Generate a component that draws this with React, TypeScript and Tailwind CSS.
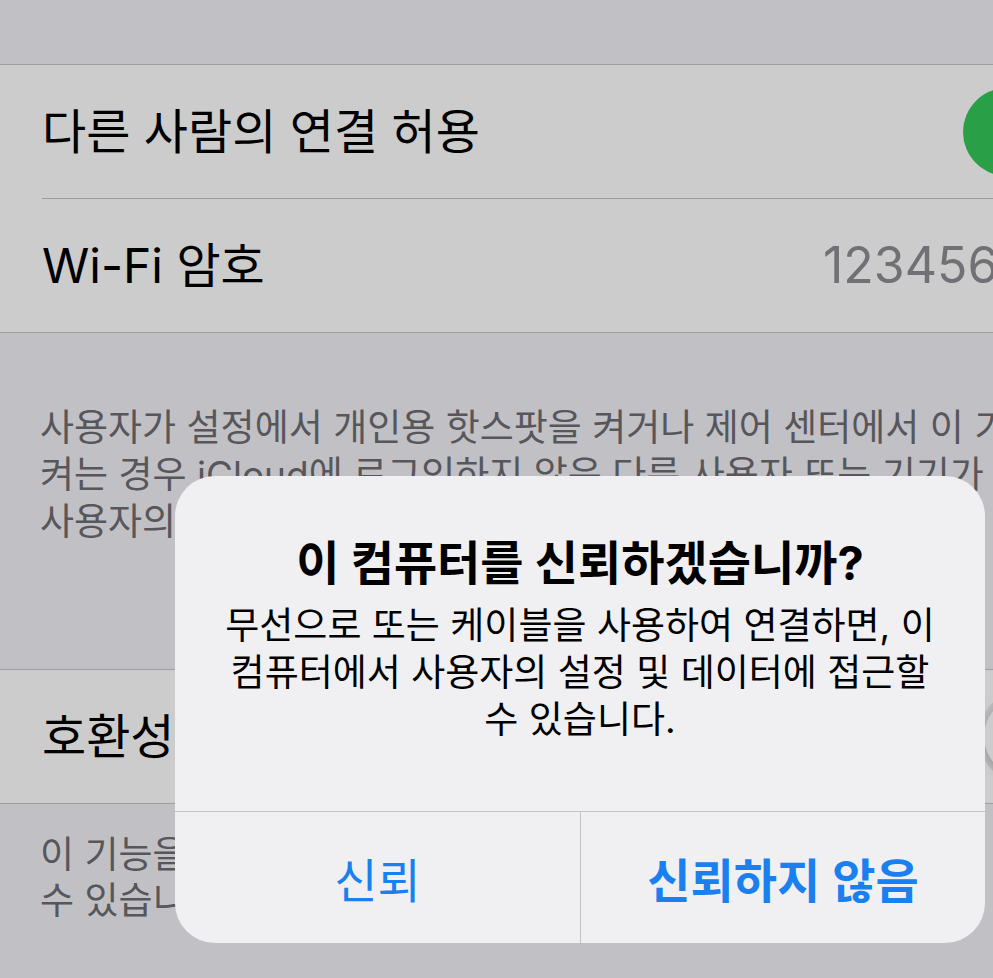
const font = { fontFamily: '"Inter", "Noto Sans CJK KR", sans-serif' };

function Toggle({ on }: { on: boolean }) {
  if (on) {
    return <div className="h-[88px] w-[153px] shrink-0 rounded-full bg-[#34c759]" />;
  }
  return (
    <div className="flex h-[93px] w-[153px] shrink-0 items-center rounded-full bg-[#e9e9eb] px-[6px]">
      <div className="h-[81px] w-[81px] rounded-full bg-white shadow-[0_3px_8px_rgba(0,0,0,0.2)]" />
    </div>
  );
}

function Alert() {
  return (
    <div className="flex w-[810px] flex-col overflow-hidden rounded-[40px] bg-[#f0f0f2] text-center">
      <div className="px-[30px] pb-[68px] pt-[60px]">
        <div className="text-[47px] font-bold leading-[54px] text-black">이 컴퓨터를 신뢰하겠습니까?</div>
        <div className="mt-[12px] text-[37px] leading-[47px] text-black">
          무선으로 또는 케이블을 사용하여 연결하면, 이
          <br />
          컴퓨터에서 사용자의 설정 및 데이터에 접근할
          <br />
          수 있습니다.
        </div>
      </div>
      <div className="grid h-[132px] grid-cols-2 border-t border-[#c3c3c6]">
        <button className="flex items-center justify-center pt-[8px] text-[47px] text-[#1a80f0]">신뢰</button>
        <button className="flex items-center justify-center border-l border-[#c3c3c6] pt-[8px] text-[47px] font-semibold text-[#1a80f0]">
          신뢰하지 않음
        </button>
      </div>
    </div>
  );
}

export default function App() {
  return (
    <div className="h-[978px] w-[993px] overflow-hidden bg-[#f2f2f7]" style={font}>
      <div className="relative w-[1164px]">
        <div className="h-[64px]" />

        <div className="border-y border-[#c6c6c8] bg-white">
          <div className="flex h-[133px] items-center justify-between pl-[42px] pr-[48px]">
            <span className="text-[48px] text-black">다른 사람의 연결 허용</span>
            <Toggle on />
          </div>
          <div className="ml-[42px] border-t border-[#c6c6c8]" />
          <div className="flex h-[133px] items-center pl-[42px]">
            <span className="w-[781px] shrink-0 text-[48px] text-black">Wi-Fi 암호</span>
            <span className="text-[50px] text-[#8e8e93]">12345678</span>
          </div>
        </div>

        <div className="whitespace-nowrap px-[40px] pb-[124px] pt-[71px] text-[37px] leading-[47px] text-[#6d6d72]">
          <div>사용자가 설정에서 개인용 핫스팟을 켜거나 제어 센터에서 이 기능을</div>
          <div>켜는 경우 iCloud에 로그인하지 않은 다른 사용자 또는 기기가</div>
          <div>사용자의 공유 네트워크를 찾을 수 있습니다.</div>
        </div>

        <div className="border-y border-[#c6c6c8] bg-white">
          <div className="flex h-[133px] items-center justify-between pl-[42px] pr-[33px]">
            <span className="text-[48px] text-black">호환성 최대화</span>
            <Toggle on={false} />
          </div>
        </div>

        <div className="whitespace-nowrap px-[40px] pt-[28px] text-[37px] leading-[46px] text-[#6d6d72]">
          <div>이 기능을 켜면 핫스팟에 연결된 기기의 인터넷 성능이 저하될</div>
          <div>수 있습니다.</div>
        </div>

        <div className="absolute inset-0 h-[978px] bg-black/20" />
        <div className="absolute inset-x-0 top-[476px] flex justify-center pr-[4px]">
          <Alert />
        </div>
      </div>
    </div>
  );
}
